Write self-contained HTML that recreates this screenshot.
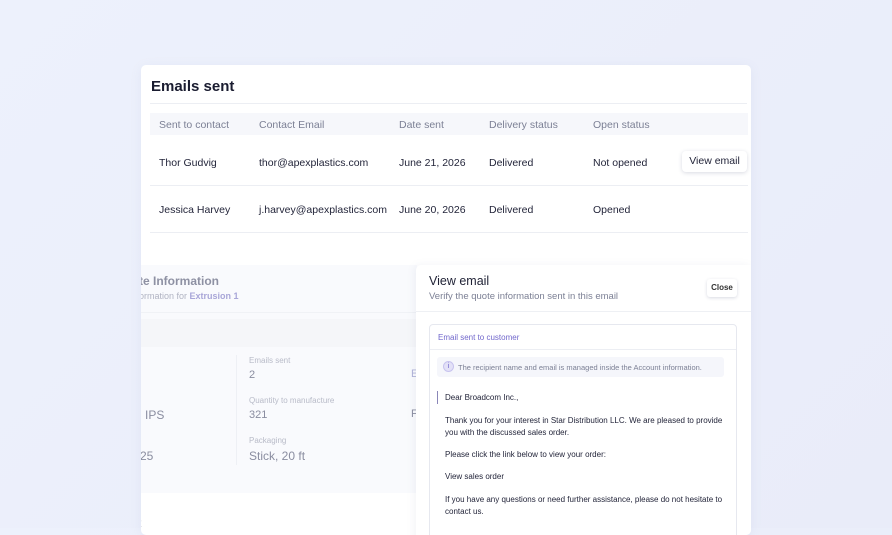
<!DOCTYPE html>
<html><head><meta charset="utf-8"><style>
*{box-sizing:border-box;margin:0;padding:0}
body{width:892px;height:528px;overflow:hidden;background:linear-gradient(135deg,#edf1fc,#e9ecf9);font-family:"Liberation Sans",sans-serif;position:relative;color:#1f2135}
.card{position:absolute;left:141px;top:65px;width:610px;height:470px;background:#fff;border-radius:5px;overflow:hidden;box-shadow:0 2px 12px rgba(100,110,160,.08)}
.t{position:absolute;white-space:nowrap}
.h{font-size:10.5px;color:#7c8095}
.r{font-size:10.5px;color:#23253a}
</style></head><body>
<div class="card">
 <div class="t" style="left:10px;top:13px;font-size:15px;font-weight:bold;color:#1a1c30">Emails sent</div>
 <div style="position:absolute;left:9px;right:4px;top:38px;height:1px;background:#eceef3"></div>
 <div style="position:absolute;left:9px;right:3px;top:48px;height:22px;background:#f6f7fb"></div>
 <div class="t h" style="left:18px;top:54px">Sent to contact</div>
 <div class="t h" style="left:118px;top:54px">Contact Email</div>
 <div class="t h" style="left:258px;top:54px">Date sent</div>
 <div class="t h" style="left:348px;top:54px">Delivery status</div>
 <div class="t h" style="left:452px;top:54px">Open status</div>
 <div class="t r" style="left:18px;top:92px">Thor Gudvig</div>
 <div class="t r" style="left:118px;top:92px">thor@apexplastics.com</div>
 <div class="t r" style="left:258px;top:92px">June 21, 2026</div>
 <div class="t r" style="left:348px;top:92px">Delivered</div>
 <div class="t r" style="left:452px;top:92px">Not opened</div>
 <div class="t" style="left:541px;top:86px;width:65px;height:21px;border-radius:4px;box-shadow:0 1px 4px rgba(60,70,110,.2);font-size:10.5px;line-height:21px;text-align:center;color:#23253a">View email</div>
 <div style="position:absolute;left:9px;right:3px;top:120px;height:1px;background:#eceef3"></div>
 <div class="t r" style="left:18px;top:139px">Jessica Harvey</div>
 <div class="t r" style="left:118px;top:139px">j.harvey@apexplastics.com</div>
 <div class="t r" style="left:258px;top:139px">June 20, 2026</div>
 <div class="t r" style="left:348px;top:139px">Delivered</div>
 <div class="t r" style="left:452px;top:139px">Opened</div>
 <div style="position:absolute;left:9px;right:3px;top:167px;height:1px;background:#eceef3"></div>
 <!-- faded panel -->
 <div style="position:absolute;left:0;top:200px;width:276px;height:228px;background:#f9fafd"></div>
 <div style="position:absolute;left:0;top:247px;width:276px;height:1px;background:#f0f2f6"></div>
 <div style="position:absolute;left:0;top:254px;width:276px;height:28px;background:#f5f6f9"></div>
 <div style="position:absolute;left:95px;top:290px;width:1px;height:110px;background:#eef0f5"></div>
 <div class="t" style="left:-2px;top:209px;font-size:12px;font-weight:bold;color:#8e91a3">te Information</div>
 <div class="t" style="left:-2px;top:226px;font-size:9px;color:#b0b3c2">ormation for <span style="color:#a9a6d8;font-weight:bold">Extrusion 1</span></div>
 <div class="t" style="left:108px;top:291px;font-size:8px;color:#b8bbc8">Emails sent</div>
 <div class="t" style="left:108px;top:304px;font-size:11px;color:#8a8da0">2</div>
 <div class="t" style="left:108px;top:331px;font-size:8px;color:#b8bbc8">Quantity to manufacture</div>
 <div class="t" style="left:108px;top:344px;font-size:11px;color:#8a8da0">321</div>
 <div class="t" style="left:108px;top:371px;font-size:8px;color:#b8bbc8">Packaging</div>
 <div class="t" style="left:108px;top:384px;font-size:12px;color:#8a8da0">Stick, 20 ft</div>
 <div class="t" style="left:4px;top:343px;font-size:12px;color:#8a8da0">IPS</div>
 <div class="t" style="left:-1px;top:384px;font-size:12px;color:#8a8da0">25</div>
 <div class="t" style="left:-3px;top:451px;font-size:12px;color:#8a8da0">t</div>
 <div class="t" style="left:270px;top:303px;font-size:11px;color:#b0b3d8">E</div>
 <div class="t" style="left:270px;top:343px;font-size:11px;color:#8a8da0">F</div>
 <!-- email panel -->
 <div style="position:absolute;left:275px;top:200px;width:335px;height:280px;background:#fff;border-top-left-radius:5px;box-shadow:-2px 0 8px rgba(100,110,150,.08)">
  <div class="t" style="left:13px;top:9px;font-size:12.5px;color:#1f2135">View email</div>
  <div class="t" style="left:13px;top:26px;font-size:9.5px;color:#7c8095">Verify the quote information sent in this email</div>
  <div class="t" style="left:291px;top:14px;width:30px;height:18px;border-radius:3px;box-shadow:0 1px 3px rgba(60,70,110,.2);font-size:8px;line-height:18px;text-align:center;font-weight:bold;color:#333">Close</div>
  <div style="position:absolute;left:0;right:0;top:46px;height:1px;background:#eef0f4"></div>
  <div style="position:absolute;left:13px;top:59px;width:308px;height:230px;border:1px solid #e6e8ef;border-radius:4px">
   <div class="t" style="left:8px;top:8px;font-size:8px;color:#7167cc">Email sent to customer</div>
   <div style="position:absolute;left:0;right:0;top:24px;height:1px;background:#eceef3"></div>
   <div style="position:absolute;left:7px;top:32px;width:287px;height:20px;background:#f5f6fb;border-radius:3px"></div>
   <div style="position:absolute;left:13px;top:36px;width:11px;height:11px;border-radius:50%;background:#e3e1f7;border:1px solid #c7c3ee;font-size:7px;line-height:10px;text-align:center;color:#6a60c8">i</div>
   <div class="t" style="left:28px;top:38px;font-size:7.5px;color:#7c8095">The recipient name and email is managed inside the Account information.</div>
   <div style="position:absolute;left:7px;top:66px;width:1px;height:13px;background:#8a86b8"></div>
   <div class="t" style="left:15px;top:68px;font-size:8px;color:#23253a">Dear Broadcom Inc.,</div>
   <div class="t" style="left:15px;top:90px;font-size:8px;color:#23253a;line-height:11.5px">Thank you for your interest in Star Distribution LLC. We are pleased to provide<br>you with the discussed sales order.</div>
   <div class="t" style="left:15px;top:125px;font-size:8px;color:#23253a">Please click the link below to view your order:</div>
   <div class="t" style="left:15px;top:147px;font-size:8px;color:#23253a">View sales order</div>
   <div class="t" style="left:15px;top:169px;font-size:8px;color:#23253a;line-height:11.5px">If you have any questions or need further assistance, please do not hesitate to<br>contact us.</div>
  </div>
 </div>
</div>
</body></html>
